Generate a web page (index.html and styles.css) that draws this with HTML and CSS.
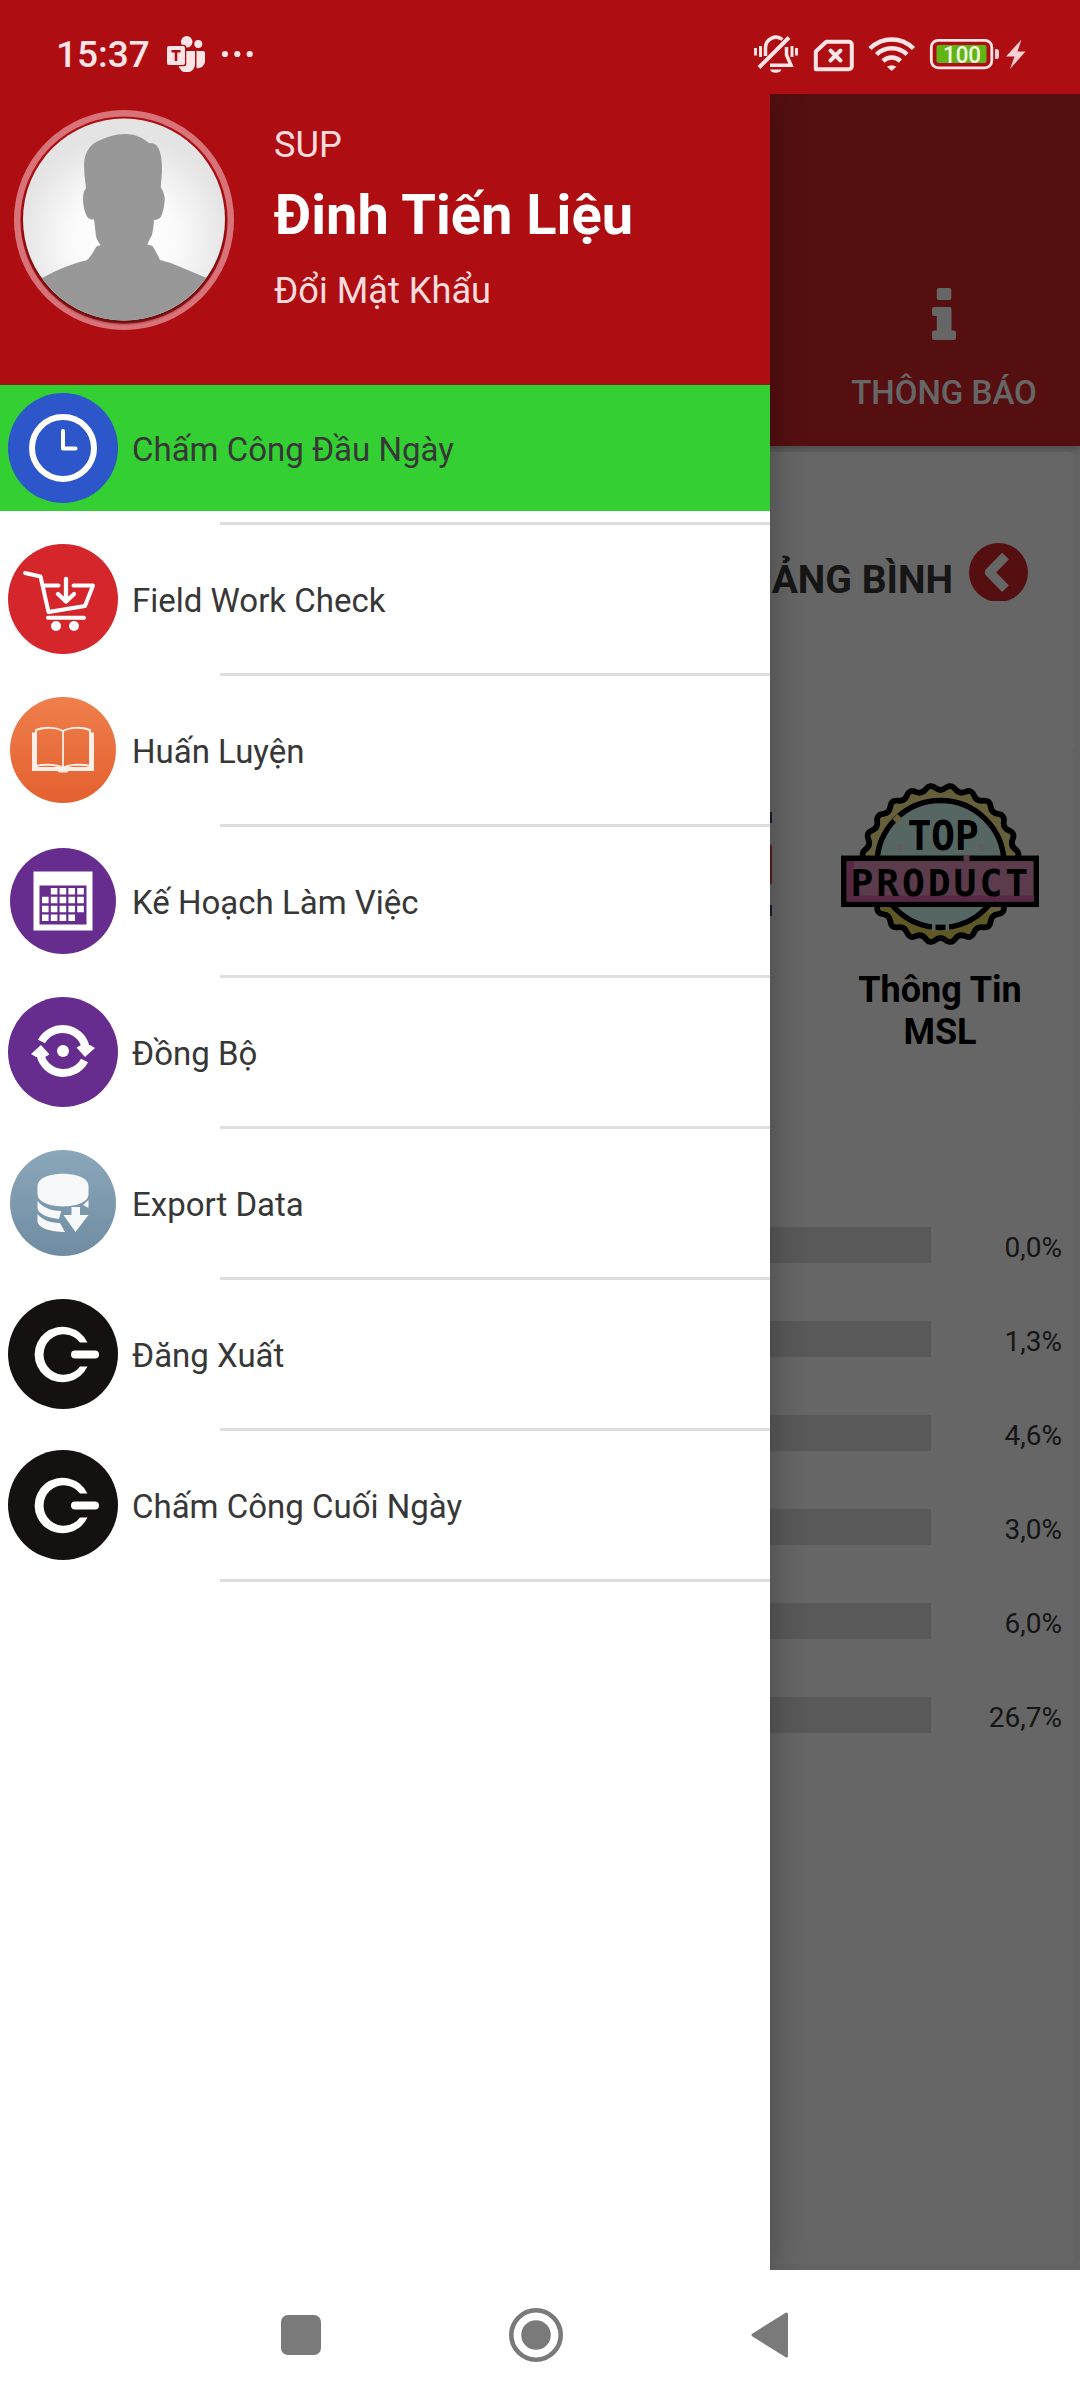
FILE: index.html
```html
<!DOCTYPE html>
<html lang="vi">
<head>
<meta charset="utf-8">
<title>Menu</title>
<link rel="stylesheet" href="styles.css">
</head>
<body>
<div class="screen">
  <header class="status">
    <span class="time">15:37</span>
    <svg class="teams" viewBox="167 36 38 36" width="38" height="36">
      <g fill="#fde4e6">
        <circle cx="186.7" cy="41.8" r="5.8"/><circle cx="198.3" cy="44" r="4"/>
        <path d="M196.5 51H203a2 2 0 0 1 2 2v8.500a7 7 0 0 1-8.500 6.500z"/>
        <path d="M178.500 51H195v13a8.300 8.300 0 0 1-16.500 1.500z"/>
      </g>
      <rect x="166" y="44.800" width="20.300" height="21.500" rx="2.500" fill="#ae0e12"/>
      <rect x="167" y="46" width="18" height="19" rx="2" fill="#fde4e6"/>
      <path d="M171.500 51.200h9M176 51.200v9.800" stroke="#ae0e12" stroke-width="2.600"/>
    </svg>
    <svg class="dots" viewBox="221 50 32 8" width="32" height="8" fill="#fde4e6"><circle cx="225" cy="54" r="3.100"/><circle cx="237.300" cy="54" r="3.100"/><circle cx="249.700" cy="54" r="3.100"/></svg>
    <svg class="system" viewBox="754 34 274 40" width="274" height="40">
      <g fill="none" stroke="#fde4e6" stroke-width="3.500">
        <path d="M755.500 48v7.500M760.500 46v11M792 46v11M796.500 48v7.500" stroke-width="2.900"/>
        <path d="M765.500 56v-8a10.500 10.500 0 0 1 17-8.500M786.500 47v8l4.500 10.300H770"/>
        <path d="M759 67.500l30-30" stroke-width="4"/>
        <path d="M815.800 69.200V51.500l10.500-9.700h22.500a3 3 0 0 1 3 3v21.400a3 3 0 0 1-3 3z" stroke-width="4" stroke-linejoin="round"/>
        <path d="M830.500 50.500l10 10M840.500 50.500l-10 10" stroke-width="4" stroke-linecap="round"/>
        <path d="M870 48.500a30.500 30.500 0 0 1 43.500 0" stroke-width="4.500"/>
        <path d="M876.500 54.500a22 22 0 0 1 30.500 0" stroke-width="4.500"/>
        <path d="M883 61a13 13 0 0 1 17.500 0" stroke-width="4.500"/>
        <rect x="931.300" y="40.300" width="60.500" height="27.500" rx="7" stroke-width="2.800"/>
      </g>
      <path d="M770 69.500h11.500a6 4.500 0 0 1-11.500 0z" fill="#fde4e6"/>
      <path d="M891.700 71l-4.700-4.200a7 5 0 0 1 9.400 0z" fill="#fde4e6"/>
      <rect x="936.500" y="45" width="50" height="18" rx="2" fill="#5fb416"/>
      <path d="M995 49h1.500a2.500 2.500 0 0 1 2.500 2.500v5a2.500 2.500 0 0 1-2.500 2.500H995z" fill="#f6cfd2"/>
      <path d="M1021.500 39.500l-15.500 17h8.500l-4.500 12.500 15.500-17.500h-8z" fill="#f6cfd2"/>
      <text x="943" y="62.500" textLength="38" lengthAdjust="spacingAndGlyphs" class="charge">100</text>
    </svg>
  </header>

  <div class="app">
    <main class="page">
      <div class="topbar">
        <div class="tab">
          <svg viewBox="0 0 24 52" width="24" height="52" fill="#fff"><rect x="4.800" width="14.500" height="12" rx="2"/><path d="M2 19h15.500a2 2 0 0 1 2 2v21.500H22a2 2 0 0 1 2 2V50a2 2 0 0 1-2 2H2a2 2 0 0 1-2-2v-5.500a2 2 0 0 1 2-2h2.800V28H2a2 2 0 0 1-2-2v-5a2 2 0 0 1 2-2z"/></svg>
          <span>THÔNG BÁO</span>
        </div>
      </div>
      <section class="card place">
        <h2>QUẢNG BÌNH</h2>
        <svg viewBox="0 0 59 58" width="59" height="58"><circle cx="29.500" cy="29.500" r="29.500" fill="#d4262b"/><path d="M36.500 13L20.500 29.300l16 16.500" fill="none" stroke="#fff" stroke-width="9.500" stroke-linejoin="round"/></svg>
      </section>
      <section class="card tiles">
        <div class="tile">
          <svg viewBox="0 0 200 164" width="200" height="164"><path d="M20 30h180v11H20zM20 123h180v11H20z" fill="#4a5480"/><rect x="10" y="62" width="190" height="41" rx="3" fill="#f4443c"/></svg>
        </div>
        <div class="tile">
          <svg viewBox="841 782 198 164" width="198" height="164">
            <defs>
              <path id="scallop" d="M-5.290-76.160Q0-72 5.290-76.160Q10.570-80.310 14.600-74.930Q18.630-69.550 24.820-72.190Q31-74.830 33.500-68.590Q36-62.350 42.660-63.310Q49.310-64.260 50.110-57.590Q50.910-50.910 57.590-50.110Q64.260-49.310 63.310-42.660Q62.350-36 68.590-33.500Q74.830-31 72.190-24.820Q69.550-18.630 74.930-14.600Q80.310-10.570 76.160-5.290"/>
              <g id="seal-edge"><use href="#scallop"/><use href="#scallop" transform="rotate(90)"/><use href="#scallop" transform="rotate(180)"/><use href="#scallop" transform="rotate(270)"/></g>
            </defs>
            <g transform="translate(940.500 864)">
              <circle r="76" fill="#fff092"/>
              <path d="M-76 0A76 76 0 0 0 54 54L40 40A60 60 0 0 1-60 0z" fill="#eadb5c"/>
              <use href="#seal-edge" fill="none" stroke="#000" stroke-width="5.800"/>
              <circle r="63.500" fill="#d8fff8" stroke="#000" stroke-width="5.500"/>
              <path d="M-45.500-42.500l5-5" stroke="#fff092" stroke-width="7"/>
              <path d="M-8.500 63h3.500M5 63h3.500" stroke="#d8fff8" stroke-width="7"/>
            </g>
            <path d="M897 844h6v6h-6zM978 844h6v6h-6z" fill="#f5e2e6"/>
            <rect x="843.800" y="858.300" width="192.500" height="46" fill="#e494be" stroke="#000" stroke-width="5.500"/>
            <path d="M847 895.500h187v6H847zM847 861h7v40h-7z" fill="#d765a8"/>
            <path d="M963.500 855h6v6h-6z" fill="#e494be"/>
            <text x="907.500" y="849.500" class="stamp stamp-top">TOP</text>
            <text x="850.500" y="895.500" class="stamp">PRODUCT</text>
          </svg>
          <p>Thông Tin<br>MSL</p>
        </div>
      </section>
      <section class="card rates">
        <div class="rate"><i></i><b>0,0%</b></div>
        <div class="rate"><i></i><b>1,3%</b></div>
        <div class="rate"><i></i><b>4,6%</b></div>
        <div class="rate"><i></i><b>3,0%</b></div>
        <div class="rate"><i></i><b>6,0%</b></div>
        <div class="rate"><i></i><b>26,7%</b></div>
      </section>
    </main>
    <div class="scrim"></div>

    <aside class="drawer">
      <div class="profile">
        <svg class="avatar" viewBox="-110 -110 220 220" width="220" height="220">
          <defs>
            <radialGradient id="backdrop" cx=".5" cy=".6" r=".52"><stop offset="0" stop-color="#fff"/><stop offset=".5" stop-color="#fbfbfb"/><stop offset="1" stop-color="#e4e4e4"/></radialGradient>
            <clipPath id="face"><circle cy="-.500" r="101"/></clipPath>
            <filter id="soft" x="-10%" y="-10%" width="120%" height="120%"><feGaussianBlur stdDeviation="1.500"/></filter>
          </defs>
          <circle r="106.800" fill="none" stroke="#d9737a" stroke-width="6.400"/>
          <circle cy="2.500" r="101" fill="#5a0a10" opacity=".85" filter="url(#soft)"/>
          <circle cy="-.500" r="101" fill="url(#backdrop)"/>
          <path clip-path="url(#face)" fill="#989898" d="M-110 70L-81 57.500C-65 49-50 43-38 40.500Q-34.500 39-27.500 26.500L-23.500 25Q-28.500 19-28.500 12L-30-.7Q-35.500 0-37.500-4.500Q-41-12-41-21Q-41-29-38-31.700Q-40-45-40-56.700C-39-68-34-75-27-78.500C-18-83-8-86 1-86C12-86 19-82 25-77C32-77 34-74 36-68C38-61 38-54 38-48L36.700-32.700Q40.700-27 40.700-20Q40-10 37-3.300Q35-.5 30 0Q29.500 9 28 15Q25 20 23.300 24.500L28.500 26Q33 33 36 40Q40 41 48 43.500L81 57.300L110 70V110H-110z"/>
        </svg>
        <div class="who">
          <span class="role">SUP</span>
          <strong>Đinh Tiến Liệu</strong>
          <span class="password">Đổi Mật Khẩu</span>
        </div>
      </div>
      <ul class="menu">
        <li><a class="item active">
          <svg viewBox="-55 -55 110 110" width="110" height="110"><circle r="55" fill="#2d56cb"/><circle r="31" fill="none" stroke="#fff" stroke-width="6"/><path d="M0-17V.500H12.500" fill="none" stroke="#fff" stroke-width="4" stroke-linecap="round" stroke-linejoin="round"/></svg>
          <span>Chấm Công Đầu Ngày</span></a></li>
        <li><a class="item">
          <svg viewBox="-55 -55 110 110" width="110" height="110"><circle r="55" fill="#d4262b"/><g fill="none" stroke="#fff" stroke-width="4" stroke-linecap="round" stroke-linejoin="round"><path d="M-38-26L-22.500-22.500L-14.500 13L22 7L30-13.500H10.500M-4.500-13.500H-18"/><path d="M-15 18.800H21"/><path d="M3-20V1M-5-5L3 2.500L11-5" stroke-width="4.300"/></g><circle cx="-7" cy="27" r="5" fill="#fff"/><circle cx="11" cy="27" r="5" fill="#fff"/></svg>
          <span>Field Work Check</span></a></li>
        <li><a class="item">
          <svg viewBox="-55 -55 110 110" width="110" height="110"><defs><linearGradient id="orange" x2="0" y2="1"><stop stop-color="#ee7f4c"/><stop offset="1" stop-color="#e4602f"/></linearGradient></defs><circle r="53" fill="url(#orange)"/><g fill="none" stroke="#fdeee7"><path d="M0-19C-7-23-19-23-27-20V16C-20 14-7 14 0 18C7 14 20 14 27 16V-20C19-23 7-23 0-19z" stroke-width="2"/><path d="M-29-17.500V19H29V-17.500" stroke-width="4"/><path d="M0-19V19" stroke-width="1.800"/></g><path d="M-6 17h12v3.500l-2 2h-8l-2-2z" fill="#fdeee7"/></svg>
          <span>Huấn Luyện</span></a></li>
        <li><a class="item">
          <svg viewBox="-55 -55 110 110" width="110" height="110"><circle r="53" fill="#662d8f"/><rect x="-29.500" y="-29.500" width="59" height="59" fill="#fff"/><rect x="-23.500" y="-15.500" width="47" height="39" fill="#662d8f"/><g stroke="#fff" stroke-width="6.500" stroke-dasharray="6.600 2.200"><path d="M-12.200-9.800H23M-21-.9H23M-21 8H23M-21 16.800H13"/></g></svg>
          <span>Kế Hoạch Làm Việc</span></a></li>
        <li><a class="item">
          <svg viewBox="-55 -55 110 110" width="110" height="110"><circle r="55" fill="#662d8f"/><g fill="none" stroke="#fff" stroke-width="8"><path d="M-21.500-10.500A23.500 22.500 0 0 1 22.500-5"/><path d="M21.500 8.500A23.500 22.500 0 0 1-22.500 3"/></g><path d="M13.500-4.500L18-7L27-7L32-4L22 5zM-32 2L-22-7L-13.500 2.500L-18 5H-27z" fill="#fff"/><circle cy="-1" r="6" fill="#fff"/></svg>
          <span>Đồng Bộ</span></a></li>
        <li><a class="item">
          <svg viewBox="-55 -55 110 110" width="110" height="110"><defs><linearGradient id="steel" x2="0" y2="1"><stop stop-color="#8aa7ba"/><stop offset="1" stop-color="#6f8ca2"/></linearGradient></defs><circle r="53" fill="url(#steel)"/><g fill="#f6f8fa"><path d="M-25.500-17C-25.500-33.500 25.500-33.500 25.500-17V-9C25.500 7.500-25.500 7.500-25.500-9z"/><path d="M-25.500-2C-20 5-10 8-2 8V9L-4 16C-14 15-25.500 11-25.500 5z"/><path d="M-25.500 11C-20 18-10 20-3 20L2 29C-12 29-25.500 25-25.500 18z"/><path d="M20 2L25.500-3V5z"/><path d="M8.500 4h8.500v8h8.500L12.500 29L.5 12h8z"/></g></svg>
          <span>Export Data</span></a></li>
        <li><a class="item">
          <svg viewBox="-55 -55 110 110" width="110" height="110"><circle r="55" fill="#151110"/><path d="M24.500-11.500A27.800 27.800 0 1 0 24.500 12.500H17A20.200 20.200 0 1 1 17-11.500z" fill="#fff"/><path d="M12 .500H32" stroke="#fff" stroke-width="8" stroke-linecap="round"/></svg>
          <span>Đăng Xuất</span></a></li>
        <li><a class="item">
          <svg viewBox="-55 -55 110 110" width="110" height="110"><circle r="55" fill="#151110"/><path d="M24.500-11.500A27.800 27.800 0 1 0 24.500 12.500H17A20.200 20.200 0 1 1 17-11.500z" fill="#fff"/><path d="M12 .500H32" stroke="#fff" stroke-width="8" stroke-linecap="round"/></svg>
          <span>Chấm Công Cuối Ngày</span></a></li>
      </ul>
    </aside>
  </div>

  <nav class="navbar">
    <svg viewBox="0 0 40 40" width="40" height="40"><rect width="40" height="40" rx="7" fill="#7a7a7a"/></svg>
    <svg viewBox="-27 -27 54 54" width="54" height="54"><circle r="24.700" fill="none" stroke="#7a7a7a" stroke-width="4.600"/><circle r="14.800" fill="#7a7a7a"/></svg>
    <svg viewBox="0 0 37 46" width="37" height="46"><path d="M2 23L35.500 2V44z" fill="#7a7a7a" stroke="#7a7a7a" stroke-width="3" stroke-linejoin="round"/></svg>
  </nav>
</div>
</body>
</html>
```
FILE: styles.css
```css
* { box-sizing: border-box; }
body { margin: 0; font-family: Roboto, "Noto Sans", sans-serif; }
svg { display: block; flex: none; }
h2, p, ul { margin: 0; padding: 0; }

.screen { width: 1080px; height: 2400px; display: flex; flex-direction: column; background: #fff; overflow: hidden; }

.status { height: 94px; flex: none; display: flex; background: #ae0e12; color: #fde4e6; }
.time { width: 111px; margin-left: 56px; padding-top: 33px; font-size: 37px; font-weight: 500; line-height: 44px; }
.teams { margin-top: 36px; }
.dots { margin: 50px 0 0 16px; }
.system { margin: 34px 52px 0 auto; }
.charge { font: 500 24px Roboto, sans-serif; fill: #f3f7e2; }

.app { position: relative; height: 2176px; flex: none; overflow: hidden; }
.page { height: 100%; background: #f7f7f7; display: flex; flex-direction: column; }
.topbar { height: 352px; margin-bottom: 6px; padding-top: 194px; display: flex; justify-content: flex-end; flex: none; background: #d4262b; box-shadow: 0 2px 8px rgba(0, 0, 0, .3); }
.tab { width: 272px; display: flex; flex-direction: column; align-items: center; color: #fff; font-size: 33px; font-weight: 500; line-height: 40px; }
.tab svg { margin-bottom: 33px; }
.card { margin: 0 6px; background: #fff; border-radius: 6px; flex: none; }
.place { height: 299px; padding: 91px 46px 0 0; display: flex; justify-content: flex-end; gap: 16px; }
.place h2 { margin-top: 13px; font-size: 39px; font-weight: 700; line-height: 48px; color: #373737; }
.tiles { height: 358px; padding-top: 31px; display: flex; justify-content: flex-end; }
.tile { width: 268px; display: flex; flex-direction: column; align-items: center; }
.tile p { margin-top: 23px; font-size: 36px; font-weight: 700; line-height: 42px; text-align: center; color: #000; }
.stamp { font: 700 38px "DejaVu Sans Mono", monospace; letter-spacing: 2.9px; fill: #000; }
.stamp-top { font-size: 40px; letter-spacing: -.5px; }
.rates { height: 1155px; padding: 118px 12px 0 0; display: flex; flex-direction: column; gap: 58px; }
.rate { height: 36px; display: flex; justify-content: space-between; padding-left: 294px; }
.rate i { width: 631px; background: #dedede; }
.rate b { padding-top: 3px; font-size: 28px; font-weight: 400; line-height: 36px; color: #373737; }
.scrim { position: absolute; inset: 0; background: rgba(0, 0, 0, .6); }

.drawer { position: absolute; top: 0; left: 0; width: 770px; height: 100%; background: #fff; box-shadow: 0 0 34px rgba(0, 0, 0, .32); }
.profile { height: 291px; display: flex; padding: 16px 0 0 14px; background: #ae0e12; border-bottom: 1px solid #7d260b; }
.who { margin-left: 40px; padding-top: 13px; display: flex; flex-direction: column; color: #fbdcde; font-size: 36.2px; line-height: 44px; }
.who strong { margin: 16px 0 22px; font-size: 56px; line-height: 64px; color: #fff; }
.menu { list-style: none; }
.menu li { height: 151px; }
.menu li::after { content: ""; display: block; height: 3px; margin: 11px 0 0 220px; background: #dedede; }
.item { height: 126px; padding-left: 8px; display: flex; align-items: center; gap: 14px; font-size: 33px; color: #373737; }
.item span { padding-top: 2px; }
.active { background: #33cf33; }

.navbar { height: 130px; display: flex; align-items: center; padding-left: 281px; background: #fff; }
.navbar svg:nth-child(2) { margin-left: 188px; }
.navbar svg:nth-child(3) { margin-left: 188px; }
```
